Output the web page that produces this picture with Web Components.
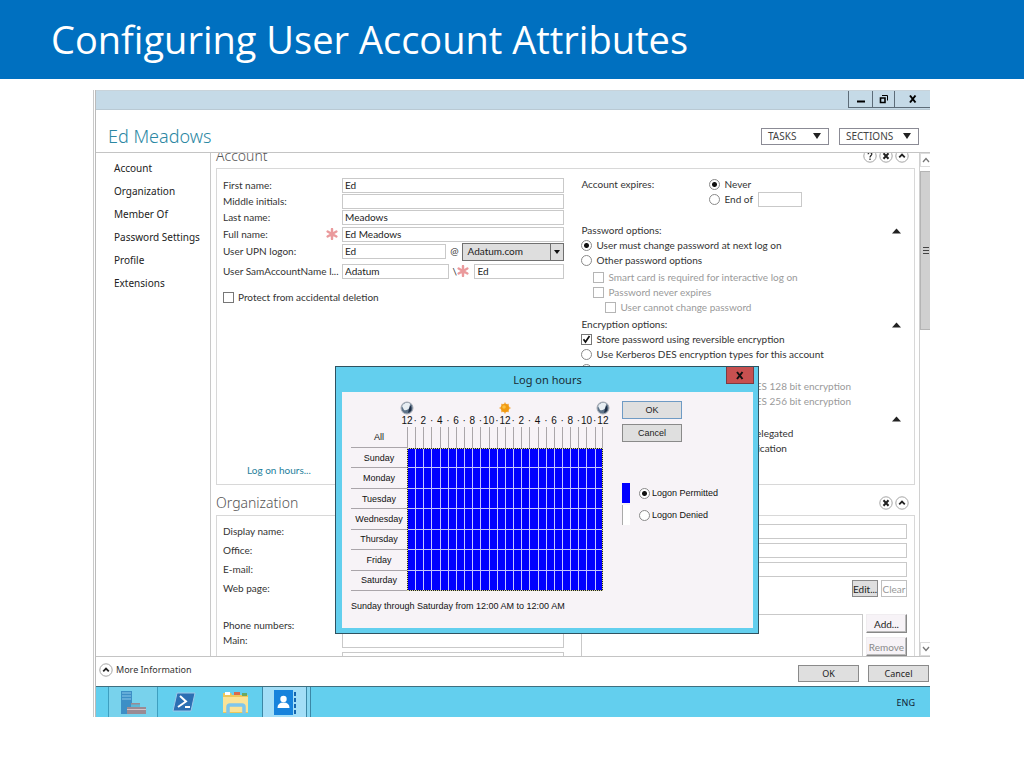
<!DOCTYPE html>
<html lang="en">
<head>
<meta charset="utf-8">
<title>Configuring User Account Attributes</title>
<style>
html,body{margin:0;height:100%}
body{background:#fff;font:10px/15px "Noto Sans","Open Sans",sans-serif;color:#333}
</style>
</head>
<body>
<slide-page></slide-page>
<script>
const define = (name, html, setup) => {
  const tpl = document.createElement('template');
  tpl.innerHTML = '<style>*{box-sizing:border-box}button,input,select{font:inherit;color:inherit;margin:0;border-radius:0}</style>' + html;
  customElements.define(name, class extends HTMLElement {
    constructor() {
      super();
      this.attachShadow({ mode: 'open' }).append(tpl.content.cloneNode(true));
    }
    connectedCallback() { if (setup && !this.ready) { this.ready = true; setup(this, this.shadowRoot); } }
  });
};

/* ---- small controls ---- */
define('star-mark', `
<style>:host{display:inline-flex;width:12px;height:12px;flex:none}</style>
<svg width="12" height="12" viewBox="0 0 12 12" stroke="#ea9a9c" stroke-width="2.4" stroke-linecap="round"><path d="M6 1v10M1.6 3.5l8.8 5M10.4 3.5l-8.8 5"/></svg>`);

define('text-field', `
<style>
:host{display:grid;grid-template-columns:119px 1fr;align-items:center;height:var(--row,16px)}
:host([bare]){display:block;height:auto}
:host([bare]) .caption{display:none}
.caption{display:flex;justify-content:space-between;align-items:center;padding-right:4px;white-space:nowrap}
.box{display:flex;align-items:center;min-width:0}
input{flex:1;min-width:0;width:100%;height:15px;padding:0 2px;border:1px solid #c9c9c9;background:#fff;color:#222}
star-mark{display:none}
:host([required]) star-mark{display:inline-flex}
</style>
<label class="caption" for="f"><span></span><star-mark></star-mark></label>
<div class="box"><input id="f" type="text"><slot></slot></div>`,
(h, r) => {
  r.querySelector('span').textContent = h.hasAttribute('bare') ? '' : h.getAttribute('label') || '';
  const i = r.querySelector('input');
  i.value = h.getAttribute('value') || '';
  i.setAttribute('aria-label', h.getAttribute('label'));
});

define('domain-select', `
<style>
:host{display:block;position:relative;flex:none;width:102px}
select{appearance:none;display:block;width:100%;height:18px;padding:0 16px 0 4px;border:1px solid #707070;background:#dedede;color:#222}
svg{position:absolute;right:0;top:0;pointer-events:none}
</style>
<select aria-label="UPN suffix"><option>Adatum.com</option></select>
<svg width="14" height="18" viewBox="0 0 14 18"><path d="M.5 1v16" stroke="#707070"/><path d="M4 7h6L7 11z" fill="#111"/></svg>`);

define('choice-item', `
<style>
:host{display:flex;align-items:center;height:15px}
label{display:flex;align-items:center;gap:var(--gap,4px);white-space:nowrap}
input{appearance:none;flex:none;width:11px;height:11px;border:1px solid #777;background:#fff}
input[type=radio]{border-radius:50%;border-color:#8a8a8a}
input[type=radio]:checked{background:radial-gradient(circle,#111 0 2px,#fff 3px)}
input[type=checkbox]:checked{background:url("data:image/svg+xml,%3Csvg xmlns='http://www.w3.org/2000/svg' viewBox='0 0 9 9'%3E%3Cpath d='M1.5 4.2l2 2.8 4-6' fill='none' stroke='%23111' stroke-width='1.7'/%3E%3C/svg%3E") center/9px no-repeat}
:host([disabled]){color:#9a9a9a}
:host([disabled]) input{border-color:#b5b5b5}
</style>
<label><input><span><slot></slot></span></label>`,
(h, r) => {
  const i = r.querySelector('input');
  i.type = h.getAttribute('type') || 'radio';
  i.checked = h.hasAttribute('checked');
  i.disabled = h.hasAttribute('disabled');
});

define('push-button', `
<style>
:host{display:block}
button{display:block;width:100%;height:100%;padding:0;line-height:12px;white-space:nowrap;border:1px solid #8a8a8a;background:#dfdfdf;color:#222}
:host([kind=focus]) button{border-color:#6f9bc4}
:host([kind=flat]) button{background:#fff;border-color:#c0c0c0;color:#999}
:host([kind=raised]) button{background:#f7f3f7;border-color:#f0edf0 #888 #888 #f0edf0;box-shadow:inset -1px -1px #bbb}
:host([disabled]) button{color:#8a8a8a}
</style>
<button type="button"><slot></slot></button>`);

define('round-icon', `
<style>
:host{display:block;flex:none;width:14px;height:14px}
button{display:block;padding:0;border:0;background:none}
svg{display:block}g{display:none}
:host([kind=help]) .help,:host([kind=close]) .close,:host([kind=up]) .up{display:block}
</style>
<button type="button"><svg width="14" height="14" viewBox="0 0 14 14" fill="none" stroke="#222">
<circle cx="7" cy="7" r="6.2" stroke="#a5a5a5" fill="#fff"/>
<g class="help"><path d="M5.2 5.2c0-2.4 3.8-2.2 3.6 0-.1 1.300-1.800 1.500-1.800 3.200M7 9.600v1.300" stroke-width="1.200"/></g>
<g class="close"><path d="M4.500 4.300l5 5.400M9.500 4.300l-5 5.400" stroke-width="2"/></g>
<g class="up"><path d="M4.200 8.400L7 5.600l2.800 2.800" stroke-width="1.800"/></g>
</svg></button>`,
(h, r) => r.querySelector('button').setAttribute('aria-label', h.getAttribute('kind')));

define('option-heading', `
<style>:host{display:flex;justify-content:space-between;align-items:center;height:15px}
button{padding:0;border:0;background:none}svg{display:block}</style>
<span><slot></slot></span><button type="button" aria-label="Collapse"><svg width="9" height="6" viewBox="0 0 9 6"><path d="M0 5.500L4.500 .5 9 5.500z" fill="#222"/></svg></button>`);

/* ---- window parts ---- */
define('menu-button', `
<style>button{display:flex;width:100%;align-items:center;justify-content:space-between;height:17px;padding:0 7px 0 6px;border:1px solid #8b8b95;background:#fff;color:#444;line-height:15px}
:host{display:block}</style>
<button type="button"><slot></slot><svg width="8" height="6" viewBox="0 0 8 6"><path d="M0 0h8L4 6z" fill="#222"/></svg></button>`);

define('title-bar', `
<style>
:host{display:flex;justify-content:flex-end;height:20px;background:#c5dae7;border-top:1px solid #c8d3da;border-bottom:1px solid #b9c9d3}
button{height:17px;padding:0;border:1px solid #5d6c78;border-top:0;border-right:0;background:none;display:grid;place-items:center}
.a{width:24px}.b{width:22px}.c{width:36px}
</style>
<button class="a" type="button" aria-label="Minimize"><svg width="10" height="10"><path d="M1 7.500h8" stroke="#000" stroke-width="2"/></svg></button>
<button class="b" type="button" aria-label="Restore"><svg width="10" height="10" fill="none" stroke="#000"><path d="M3 1.500h5.500v5"/><path d="M1.500 4h4.500v4.500H1.500z" stroke-width="1.600"/></svg></button>
<button class="c" type="button" aria-label="Close"><svg width="10" height="10"><path d="M2 1.500l5.500 7M7.500 1.500l-5.500 7" stroke="#000" stroke-width="2"/></svg></button>`);

define('side-nav', `
<style>
:host{display:block;border-right:1px solid #c9c9c9;padding:4px 0 0 18px}
nav{display:flex;flex-direction:column}
a{color:#222;text-decoration:none;height:23px;line-height:23px;white-space:nowrap}
</style>
<nav><a href="#account">Account</a><a href="#organization">Organization</a><a href="#member">Member Of</a><a href="#password">Password Settings</a><a href="#profile">Profile</a><a href="#ext">Extensions</a></nav>`);

define('form-section', `
<style>
:host{display:block}
header{display:flex;align-items:center;height:30px;padding:6px 6px 0 0}
h2{flex:1;margin:0;font:300 14px/20px "Noto Sans","Open Sans",sans-serif;color:#555}
.icons{display:flex;gap:2px}
.body{display:grid;grid-template-columns:342fr 326fr;column-gap:17px;border:1px solid #d8d8d8;padding:var(--pad,8px) 7px 0 6px}
</style>
<header><h2></h2><div class="icons"><slot name="icons"></slot></div></header>
<div class="body"><slot></slot></div>`,
(h, r) => r.querySelector('h2').textContent = h.getAttribute('heading'));

define('account-form', `
<style>
:host{display:block;margin-top:-15px;font-family:Lato,"Open Sans",sans-serif}
.col{display:flex;flex-direction:column;min-width:0}
.full{margin-top:1px}
.upn{--row:19px}.sam{--row:20px}
.at{width:16px;text-align:center}
.slash{display:flex;align-items:center;width:25px;padding-left:3px}
.sam text-field{width:90px}
.protect{margin-top:6px;height:20px}
a{margin:156px 0 6px 24px;color:#1f7f9c;text-decoration:none}
.expires{display:grid;grid-template-columns:128px 1fr;height:46px;align-items:start}
.expires text-field{width:44px;margin-left:5px}
.end{display:flex;align-items:center;height:15px}
.in1{margin-left:12px}.in2{margin-left:24px}
.g2{margin-top:2px}
option-heading{padding-right:6px}
.org{--pad:6px}
.org text-field,.org .buttons{--row:19px;height:19px}
.phones{margin-top:21px;height:12px;line-height:12px}
.buttons{display:flex;justify-content:flex-end;align-items:center;gap:3px}
.buttons push-button{height:17px;width:26px}
.reports{display:grid;grid-template-columns:1fr 41px;gap:3px;margin-top:16px}
.list{border:1px solid #c9c9c9;height:60px}
.side{display:grid;gap:4px;align-content:start}
.side push-button{height:19px}
</style>
<form-section heading="Account" id="account">
  <round-icon slot="icons" kind="help"></round-icon><round-icon slot="icons" kind="close"></round-icon><round-icon slot="icons" kind="up"></round-icon>
  <div class="col">
    <text-field label="First name:" value="Ed"></text-field>
    <text-field label="Middle initials:"></text-field>
    <text-field label="Last name:" value="Meadows"></text-field>
    <text-field class="full" label="Full name:" value="Ed Meadows" required></text-field>
    <text-field class="upn" label="User UPN logon:" value="Ed"><span class="at">@</span><domain-select></domain-select></text-field>
    <text-field class="sam" label="User SamAccountName l..." value="Adatum"><span class="slash">\\<star-mark></star-mark></span><text-field bare label="SamAccountName" value="Ed"></text-field></text-field>
    <choice-item class="protect" type="checkbox">Protect from accidental deletion</choice-item>
    <a href="#hours">Log on hours...</a>
  </div>
  <div class="col">
    <div class="expires"><span>Account expires:</span><div>
      <choice-item checked>Never</choice-item>
      <div class="end"><choice-item>End of</choice-item><text-field bare label="End of"></text-field></div></div></div>
    <option-heading>Password options:</option-heading>
    <choice-item checked>User must change password at next log on</choice-item>
    <choice-item>Other password options</choice-item>
    <choice-item class="in1 g2" type="checkbox" disabled>Smart card is required for interactive log on</choice-item>
    <choice-item class="in1" type="checkbox" disabled>Password never expires</choice-item>
    <choice-item class="in2" type="checkbox" disabled>User cannot change password</choice-item>
    <option-heading class="g2">Encryption options:</option-heading>
    <choice-item type="checkbox" checked>Store password using reversible encryption</choice-item>
    <choice-item>Use Kerberos DES encryption types for this account</choice-item>
    <choice-item>Other encryption options</choice-item>
    <choice-item class="in1 g2" type="checkbox" disabled>This account supports Kerberos AES 128 bit encryption</choice-item>
    <choice-item class="in1" type="checkbox" disabled>This account supports Kerberos AES 256 bit encryption</choice-item>
    <option-heading class="g2"></option-heading>
    <choice-item type="checkbox">Account is sensitive and cannot be delegated</choice-item>
    <choice-item type="checkbox">Do not require Kerberos pre-authentication</choice-item>
  </div>
</form-section>
<form-section heading="Organization" id="organization" class="org">
  <round-icon slot="icons" kind="close"></round-icon><round-icon slot="icons" kind="up"></round-icon>
  <div class="col">
    <text-field label="Display name:"></text-field>
    <text-field label="Office:"></text-field>
    <text-field label="E-mail:"></text-field>
    <text-field label="Web page:"></text-field>
    <div class="phones">Phone numbers:</div>
    <text-field label="Main:"></text-field>
    <text-field label="Home:"></text-field>
  </div>
  <div class="col">
    <text-field label="Job title:"></text-field>
    <text-field label="Department:"></text-field>
    <text-field label="Company:"></text-field>
    <div class="buttons"><push-button>Edit...</push-button><push-button kind="flat">Clear</push-button></div>
    <div class="reports"><div class="list"></div><div class="side"><push-button kind="raised">Add...</push-button><push-button kind="raised" disabled>Remove</push-button></div></div>
  </div>
</form-section>`);

define('scroll-bar', `
<style>
:host{display:grid;grid-template-rows:14px 1fr 14px;row-gap:4px;border-left:1px solid #d0d0d0;overflow:hidden}
.end{display:grid;place-items:center;border:1px solid #dcdcdc;border-right:0}
.thumb{display:grid;place-items:center;height:34%;background:#d0d0d0;border:1px solid #b4b4b4;border-right:0}
</style>
<div class="end"><svg width="8" height="6" fill="none" stroke="#777"><path d="M1 5l3-3.500L7 5" stroke-width="1.300"/></svg></div>
<div><div class="thumb"><svg width="8" height="7" stroke="#444"><path d="M1 .5h6M1 3.500h6M1 6.500h6"/></svg></div></div>
<div class="end"><svg width="8" height="6" fill="none" stroke="#777"><path d="M1 1l3 3.500L7 1" stroke-width="1.300"/></svg></div>`);

define('task-bar', `
<style>
:host{display:flex;align-items:stretch;height:31px;border-top:1px solid #3f6f80;background:#63cfee;color:#123;padding:0 15px 0 12px;overflow:hidden}
button{border:0;padding:0;background:none;display:grid;place-items:center}
.server{width:50px;border:1px solid #3e9fc0;border-width:0 1px;background:#78d2ec}
.plain{width:52px}
.active{width:45px;border:1px solid #3b87a6;border-width:0 1px;background:#a3def7}
.stack{width:4px;border-right:1px solid #3b87a6;background:#86d6f1}
.lang{margin-left:auto;line-height:31px;font-size:9px}
</style>
<button class="server" type="button" aria-label="Server Manager"><svg width="28" height="25" viewBox="0 0 28 25"><path d="M2 1h11v23H2z" fill="#3d8fc6"/><path d="M3 3h9M3 6h9M3 9h9" stroke="#8cc8ea"/><path d="M8 17h4v-4h9v4h6v7H8z" fill="#9a8a93"/><path d="M12 14.500h9V17h-9z" fill="#5bb8d8"/><path d="M8 19.500h19" stroke="#d4c3c8"/></svg></button>
<button class="plain" type="button" aria-label="PowerShell"><svg width="24" height="20" viewBox="0 0 24 20"><path d="M5 1h18l-4 18H1z" fill="#2c6fb3" stroke="#9fc9ea"/><path d="M8 4l6 5.500L6 15M13 15h5" fill="none" stroke="#fff" stroke-width="2"/></svg></button>
<button class="plain" type="button" aria-label="File Explorer"><svg width="28" height="25" viewBox="0 0 28 25"><path d="M1 3h8l1 2h16v18H1z" fill="#eec75a"/><path d="M3 2h5v3H3z" fill="#fff"/><path d="M12 2h6v3h-6z" fill="#d96a4a"/><path d="M20 3h5v3h-5z" fill="#6aa860"/><path d="M1 7h25v15H1z" fill="#fbe397"/><path d="M6 24v-7q0-2 2-2h12q2 0 2 2v7" fill="none" stroke="#7fc6ec" stroke-width="3.500"/></svg></button>
<button class="active" type="button" aria-label="Active Directory"><svg width="25" height="25" viewBox="0 0 25 25"><path d="M2 0h19v25H2z" fill="#1783dc"/><circle cx="11.500" cy="9" r="3.200" fill="#fff"/><path d="M5.500 18q0-5.500 6-5.500t6 5.500z" fill="#fff"/><path d="M23 2v4M23 8v4M23 14v4M23 20v4" stroke="#1565b0" stroke-width="2"/></svg></button>
<span class="stack"></span>
<span class="lang">ENG</span>`);

/* ---- log on hours ---- */
define('hours-grid', `
<style>
:host{display:block;width:252px}
.icons{display:flex;justify-content:space-between;margin:0 -7px 0 49px;height:14px}
.hours{display:grid;grid-template-columns:repeat(25,1fr);margin:0 -4px 0 52px;height:12px;font-size:10px;line-height:12px;color:#111}
.hours span{display:flex;justify-content:center;min-width:0}
.wrap{position:relative}
table{table-layout:fixed;width:100%;height:164px;border-collapse:separate;border-spacing:0}
thead tr{height:21px}
tbody tr{height:20px}
th{width:56px;padding:0;font-weight:400;line-height:12px;color:#111;border-bottom:1px solid #aaa5aa;text-align:center}
td{padding:0}
thead td{border-left:1px solid #aaa6aa}
thead td:last-child{border-right:1px solid #aaa6aa}
tbody td{background:#00f;border-left:1px solid #c4c4ff;border-bottom:1px solid #c4c4ff}
.marquee{position:absolute;left:56px;right:0;top:21px;bottom:0;border:1px solid #222;outline:1px dotted #d8d8a0;outline-offset:-1px}
</style>
<div class="icons">
<svg width="14" height="14"><circle cx="7" cy="7" r="6" fill="#5e7389" stroke="#a9adb5"/><path d="M2 5a5.500 5.500 0 0 1 8-2.500A5 5 0 0 1 4 9z" fill="#e8eef3"/><path d="M10 4a6 6 0 0 1 1 6l-3 2z" fill="#1d2c44"/></svg>
<svg width="14" height="14"><path d="M7 1l1.400 2 2.600-.3-.3 2.500L13 7l-2.300 1.800.3 2.500-2.600-.3L7 13l-1.400-2-2.600.3.300-2.500L1 7l2.300-1.800L3 2.700l2.600.3z" fill="#f2b25a"/><circle cx="7" cy="7" r="4" fill="#f09a10"/><circle cx="6" cy="6" r="1.800" fill="#fcc040"/></svg>
<svg width="14" height="14"><circle cx="7" cy="7" r="6" fill="#5e7389" stroke="#a9adb5"/><path d="M2 5a5.500 5.500 0 0 1 8-2.500A5 5 0 0 1 4 9z" fill="#e8eef3"/><path d="M10 4a6 6 0 0 1 1 6l-3 2z" fill="#1d2c44"/></svg>
</div>
<div class="hours"></div>
<div class="wrap"><table></table><div class="marquee"></div></div>`,
(h, r) => {
  const row = name => '<tr><th scope="row">' + name + '</th>' + '<td></td>'.repeat(24) + '</tr>';
  r.querySelector('.hours').innerHTML = Array.from({ length: 25 }, (_, i) =>
    '<span>' + (i % 2 ? '·' : (i % 12 || 12) ) + '</span>').join('');
  r.querySelector('table').innerHTML = '<thead>' + row('All') + '</thead><tbody>' +
    ['Sunday', 'Monday', 'Tuesday', 'Wednesday', 'Thursday', 'Friday', 'Saturday'].map(row).join('') + '</tbody>';
});

define('logon-dialog', `
<style>
:host{display:block;border:1px solid #2f5260;background:#63cfee;padding:0 5px 5px 6px}
header{position:relative;height:25px;text-align:center;font-size:11px;line-height:25px;color:#1a2c34}
.x{position:absolute;right:-1px;top:0;width:28px;height:17px;padding:0;border:1px solid #7c3b42;border-top:0;background:#c75050;display:grid;place-items:center}
.body{display:flex;gap:19px;background:#f7f3f7;height:236px;padding:9px 0 0 9px;font:9px/12px "Liberation Sans",Arial,sans-serif;color:#111}
.summary{margin:9px 0 0;white-space:nowrap;width:252px}
.actions{display:flex;flex-direction:column;width:60px;--gap:2px}
push-button{height:18px}
push-button + push-button{margin-top:5px}
.legend{display:grid;grid-template-columns:8px auto;gap:2px 9px;margin-top:41px;align-items:center}
.swatch{height:20px;background:#00f}
.swatch.off{background:#fff;border-left:1px solid #aaa}
</style>
<header>Log on hours<button class="x" type="button" aria-label="Close"><svg width="10" height="9"><path d="M2 1l5.500 7M7.500 1L2 8" stroke="#111" stroke-width="2"/></svg></button></header>
<div class="body">
  <div><hours-grid></hours-grid><p class="summary">Sunday through Saturday from 12:00 AM to 12:00 AM</p></div>
  <div class="actions"><push-button kind="focus">OK</push-button><push-button>Cancel</push-button>
    <div class="legend"><span class="swatch"></span><choice-item checked>Logon Permitted</choice-item><span class="swatch off"></span><choice-item>Logon Denied</choice-item></div></div>
</div>`);

define('account-window', `
<style>
:host{position:relative;display:flex;flex-direction:column;border-left:1px solid #c9c9c9;padding-left:1px;min-height:0}
.frame{flex:1;min-height:0;display:flex;flex-direction:column;border-left:1px solid #bbb}
.head{display:flex;align-items:center;gap:10px;height:43px;padding:10px 11px 0 12px;border-bottom:1px solid #c4c4c4}
h1{flex:1;margin:0;font-size:18px;line-height:24px;font-weight:300;color:#2b87a3}
.t{width:68px}.s{width:80px}
.main{flex:1;min-height:0;display:grid;grid-template-columns:115px minmax(0,1fr) 11px;grid-template-rows:minmax(0,1fr);overflow:hidden}
.view{overflow:hidden;padding:0 4px 0 5px}
.foot{display:flex;align-items:center;gap:9px;height:30px;padding:4px 1px 0 3px;border-top:1px solid #c4c4c4;font-size:9px}
.more{display:flex;align-items:center;gap:3px;flex:1;padding-bottom:8px}
.foot push-button{width:61px;height:17px}
logon-dialog{position:absolute;left:241px;top:276px;width:424px}
</style>
<div class="frame">
<title-bar></title-bar>
<div class="head"><h1>Ed Meadows</h1><menu-button class="t">TASKS</menu-button><menu-button class="s">SECTIONS</menu-button></div>
<div class="main"><side-nav></side-nav><div class="view"><account-form></account-form></div><scroll-bar></scroll-bar></div>
<div class="foot"><div class="more"><round-icon kind="up"></round-icon>More Information</div><push-button>OK</push-button><push-button>Cancel</push-button></div>
<task-bar></task-bar>
</div>
<logon-dialog role="dialog" aria-label="Log on hours"></logon-dialog>`);

define('slide-page', `
<style>
:host{display:flex;flex-direction:column;height:100vh;min-height:700px}
header{background:#0070c0;height:79px;padding:0 51px;color:#fff}
h1{margin:0;font:400 38px/79px "Open Sans","Noto Sans",sans-serif}
account-window{flex:1;margin:11px 94px 51px 93px}
</style>
<header><h1>Configuring User Account Attributes</h1></header>
<account-window></account-window>`);
</script>
</body>
</html>
